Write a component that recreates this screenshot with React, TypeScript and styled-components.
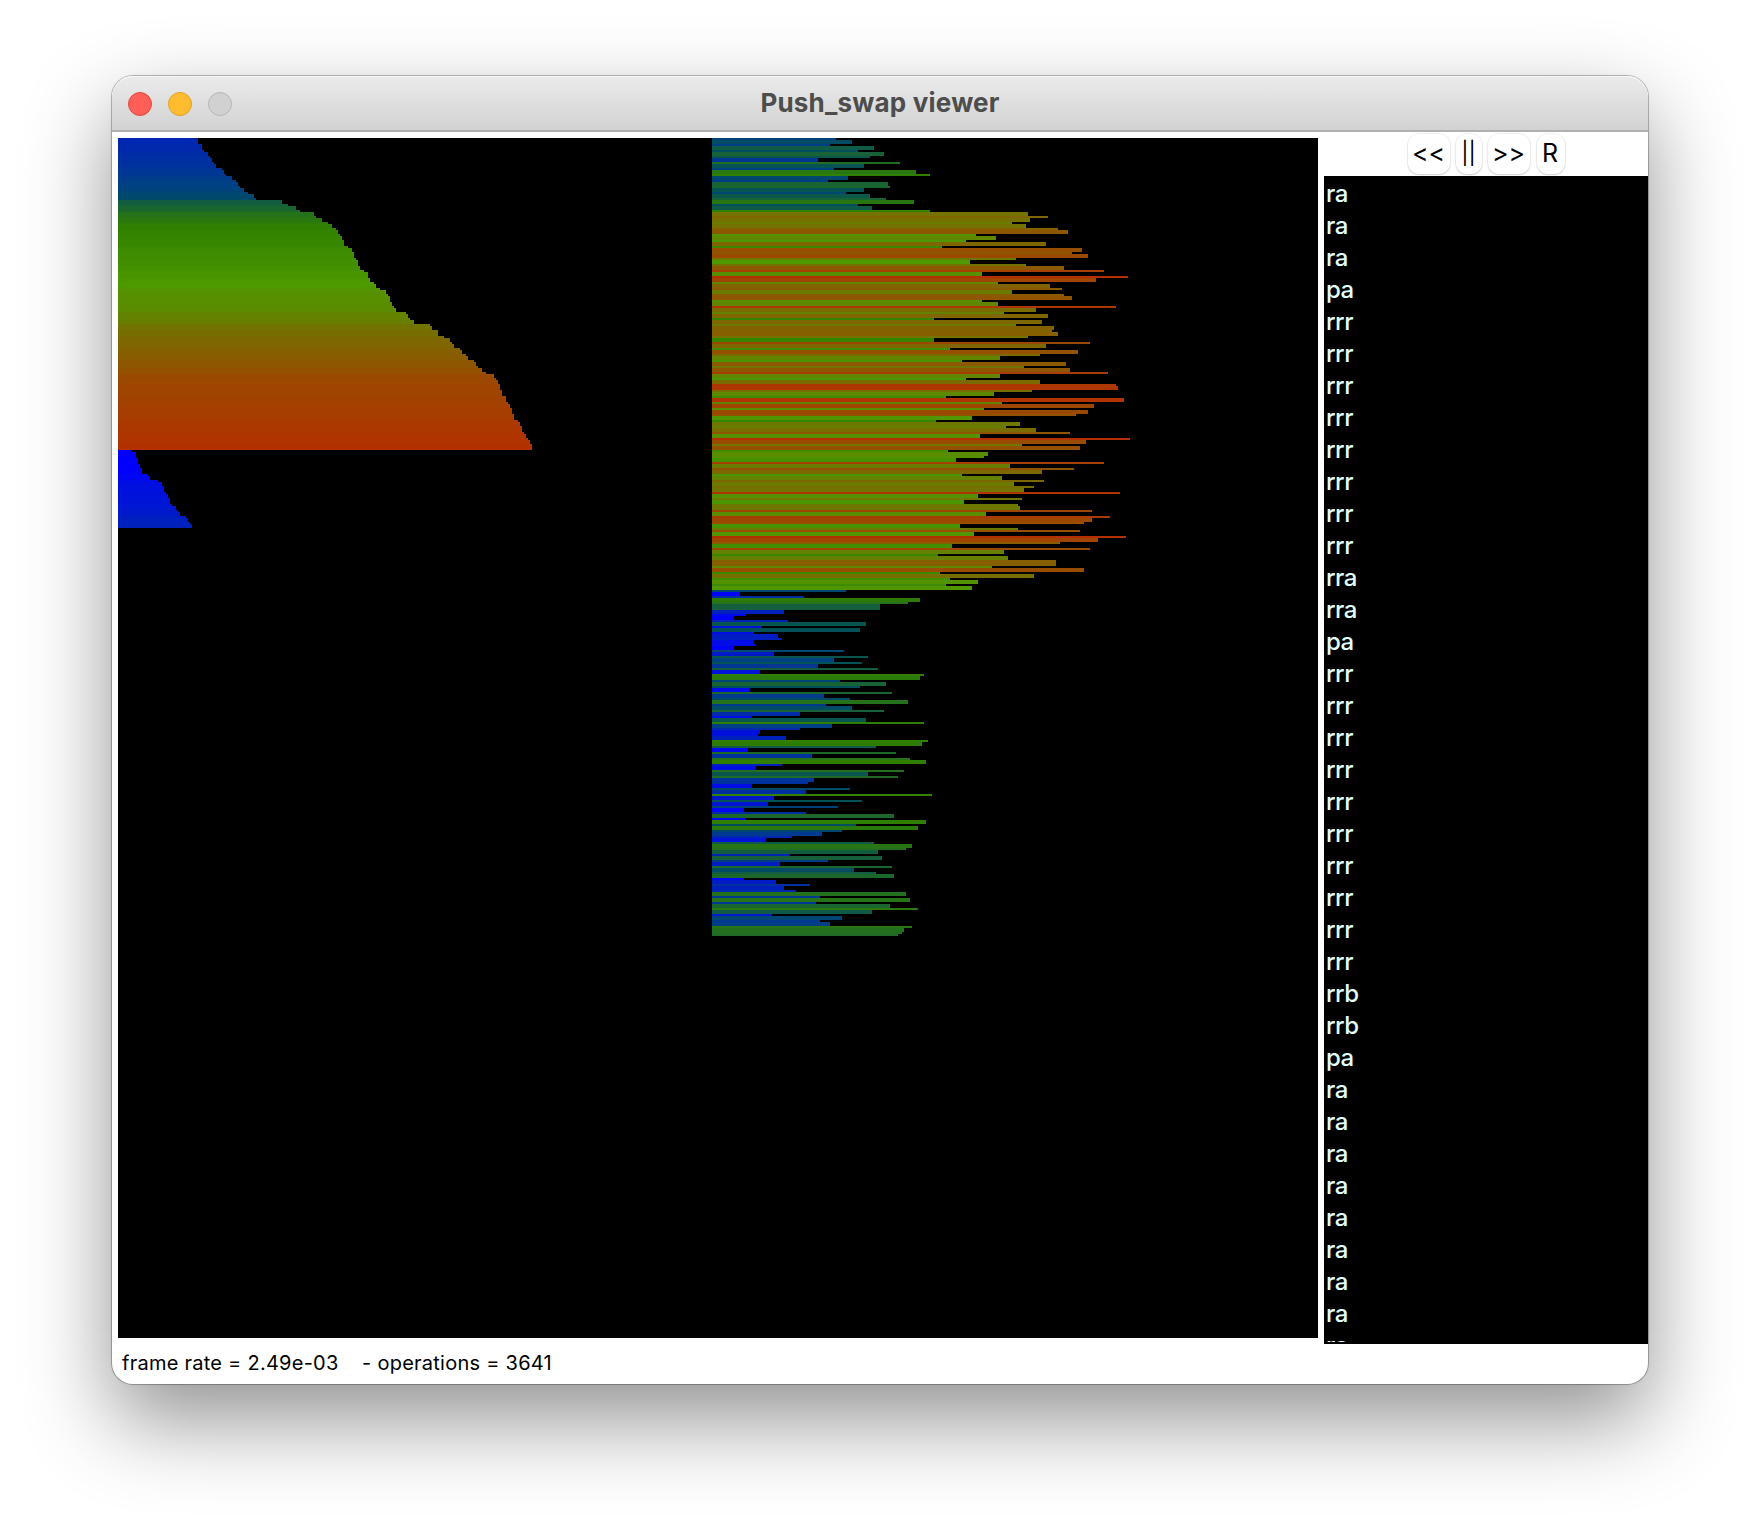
import React from "react";
import styled, { createGlobalStyle } from "styled-components";

type Run = [rows: number, value: number];
type Stop = [value: number, r: number, g: number, b: number];

const UNIT = 2;

const STACK_A: Run[] = [
  [3, 40], [3, 42], [1, 43], [2, 45], [1, 46], [2, 47], [1, 48], [2, 49], [1, 52], [2, 53], [1, 54], [2, 57],
  [1, 59], [2, 60], [1, 61], [2, 63], [1, 65], [2, 68], [1, 69], [2, 82], [1, 85], [2, 89], [1, 91], [2, 98],
  [1, 99], [2, 102], [1, 105], [2, 107], [1, 109], [2, 110], [1, 111], [2, 112], [3, 113], [1, 115], [2, 117],
  [3, 118], [1, 119], [3, 120], [2, 121], [1, 123], [3, 125], [2, 126], [1, 128], [2, 129], [1, 131], [2, 134],
  [1, 135], [3, 136], [2, 137], [1, 138], [2, 139], [1, 144], [2, 145], [1, 146], [2, 148], [1, 156], [2, 157],
  [3, 160], [1, 163], [2, 166], [1, 167], [2, 168], [1, 171], [2, 172], [1, 174], [2, 175], [1, 178], [2, 179],
  [1, 180], [2, 182], [1, 184], [2, 188], [1, 189], [2, 190], [3, 191], [3, 192], [3, 194], [1, 195], [2, 196],
  [3, 197], [3, 198], [1, 200], [2, 201], [3, 202], [1, 203], [2, 204], [1, 205], [2, 206], [3, 207],
  [1, 7], [3, 9], [3, 10], [2, 11], [3, 12], [1, 15], [2, 16], [1, 20], [2, 22], [3, 23], [1, 24], [2, 25],
  [3, 26], [1, 27], [2, 29], [1, 30], [2, 31], [1, 34], [2, 35], [1, 36], [2, 37],
];

const STACK_B: Run[] = [
  [1, 62], [2, 70], [1, 59], [2, 81], [1, 73], [2, 86], [1, 79], [2, 53], [1, 94], [2, 76], [1, 61], [2, 102],
  [1, 109], [2, 68], [1, 58], [2, 88], [1, 89], [2, 76], [1, 67], [2, 79], [1, 87], [2, 101], [1, 73], [2, 80],
  [1, 109], [2, 158], [1, 168], [2, 159], [1, 150], [2, 157], [1, 173], [2, 178], [1, 132], [2, 142], [1, 127],
  [2, 167], [1, 115], [2, 185], [1, 180], [2, 188], [1, 152], [2, 129], [1, 157], [2, 176], [1, 196], [2, 135],
  [1, 208], [2, 192], [1, 143], [2, 169], [1, 175], [2, 150], [1, 176], [2, 180], [1, 135],
  [2, 143], [1, 202], [2, 162], [1, 146], [2, 168], [1, 111], [2, 165], [1, 152], [2, 171], [1, 170], [2, 173],
  [1, 158], [2, 111], [1, 189], [2, 167], [1, 119], [2, 183], [1, 164], [2, 144], [1, 125], [2, 177], [1, 156],
  [2, 179], [1, 198], [2, 144], [1, 127], [2, 164], [1, 202], [2, 203], [1, 160], [2, 141], [1, 117], [2, 206],
  [1, 145], [2, 191], [1, 136], [2, 188], [1, 182], [2, 130], [1, 112], [2, 154], [1, 147], [2, 162], [1, 179],
  [2, 134], [1, 209], [2, 187], [1, 155], [2, 184],
  [1, 118], [2, 138], [1, 136], [2, 122], [1, 196], [2, 149], [1, 181], [2, 165], [1, 125], [2, 145], [1, 166],
  [2, 151], [1, 161], [2, 156], [1, 204], [2, 133], [1, 155], [2, 126], [1, 153], [2, 154], [1, 190], [2, 137],
  [1, 199], [2, 190], [1, 186], [2, 124], [1, 153], [1, 184], [2, 131], [1, 207], [2, 193], [1, 174], [2, 120],
  [1, 189], [2, 146], [1, 113], [2, 148], [3, 172], [1, 140], [2, 186], [1, 114], [2, 161], [1, 119], [2, 133],
  [1, 117], [2, 130],
  [1, 67], [2, 14], [1, 46], [2, 104], [1, 98], [3, 84], [2, 36], [1, 17], [2, 11], [1, 38], [2, 77], [1, 25],
  [2, 74], [1, 21], [2, 33], [1, 35], [2, 21], [1, 22], [2, 11], [1, 66], [2, 31], [1, 78], [2, 61], [1, 75],
  [2, 53], [1, 83], [2, 24], [1, 106], [2, 104], [1, 64], [2, 87], [1, 74], [2, 19], [1, 90], [2, 56], [1, 69],
  [2, 98], [1, 57], [2, 70], [1, 86], [2, 44], [1, 20], [2, 77], [1, 106], [2, 60], [1, 44], [2, 24], [1, 23],
  [2, 37], [1, 108], [2, 105], [1, 82], [2, 18], [1, 92], [2, 50], [1, 99], [2, 107], [1, 35], [2, 22],
  [1, 96], [2, 78], [1, 93], [2, 51], [1, 48], [2, 20], [1, 69], [2, 47], [1, 110], [2, 31], [1, 75], [2, 28],
  [1, 63], [2, 16], [1, 47], [2, 91], [1, 17], [2, 107], [1, 72], [2, 103], [1, 65], [2, 55], [1, 40], [2, 27],
  [1, 81], [2, 100], [1, 97], [2, 83], [1, 39], [2, 85], [1, 58], [2, 34], [1, 90], [2, 71], [1, 82], [2, 91],
  [1, 16], [2, 32], [1, 49], [2, 36], [1, 42], [2, 97], [1, 54], [2, 99], [1, 52], [2, 89], [1, 103], [2, 80],
  [1, 30], [2, 65], [1, 54], [2, 59], [1, 100], [2, 96], [1, 95], [1, 93],
];

const STOPS: Stop[] = [
  [11, 0, 0, 255],
  [40, 0, 38, 178],
  [60, 0, 64, 132],
  [74, 0, 80, 90],
  [82, 18, 92, 66],
  [108, 48, 128, 0],
  [128, 77, 153, 0],
  [208, 180, 48, 0],
];

function colorOf(value: number): string {
  const v = Math.min(Math.max(value, STOPS[0][0]), STOPS[STOPS.length - 1][0]);
  const hi = Math.max(1, STOPS.findIndex((s) => s[0] >= v));
  const a = STOPS[hi - 1];
  const b = STOPS[hi];
  const t = (v - a[0]) / (b[0] - a[0]);
  const mix = (i: 1 | 2 | 3) => Math.round(a[i] + (b[i] - a[i]) * t);
  return `rgb(${mix(1)}, ${mix(2)}, ${mix(3)})`;
}

const repeat = (op: string, n: number): string[] => Array<string>(n).fill(op);

const OPERATIONS: string[] = [
  ...repeat("ra", 3),
  "pa",
  ...repeat("rrr", 8),
  ...repeat("rra", 2),
  "pa",
  ...repeat("rrr", 10),
  ...repeat("rrb", 2),
  "pa",
  ...repeat("ra", 9),
];

const GlobalStyle = createGlobalStyle`
  *, *::before, *::after { box-sizing: border-box; }
  body { margin: 0; background: #fff; }
`;

const Desktop = styled.main`
  width: 1760px;
  height: 1532px;
  padding: 76px 112px 148px;
  overflow: hidden;
  background: #fff;
  font-family: Inter, "Liberation Sans", sans-serif;
`;

const Window = styled.section`
  display: flex;
  flex-direction: column;
  height: 1308px;
  border-radius: 21px;
  background: #fff;
  box-shadow: 0 0 0 1px rgba(0, 0, 0, 0.23), 0 0 3px rgba(0, 0, 0, 0.1), 0 36px 86px rgba(0, 0, 0, 0.43);
`;

const TitleBar = styled.header`
  display: grid;
  grid-template-columns: 1fr auto 1fr;
  align-items: center;
  flex: none;
  height: 56px;
  padding: 0 16px;
  border-radius: 21px 21px 0 0;
  border-bottom: 2px solid #b0b0b0;
  background: linear-gradient(#ebebeb, #d2d2d2);
  box-shadow: inset 0 1px 0 #f6f6f6;
`;

const Lights = styled.div`
  display: flex;
  gap: 16px;
  padding-top: 2px;
`;

const Light = styled.span<{ $fill: string; $edge: string }>`
  width: 24px;
  height: 24px;
  border-radius: 50%;
  border: 1px solid ${(p) => p.$edge};
  background: ${(p) => p.$fill};
`;

const Title = styled.h1`
  margin: 0;
  font-size: 26px;
  line-height: 32px;
  font-weight: 700;
  letter-spacing: 0.2px;
  color: #4d4d4d;
`;

const Body = styled.div`
  display: grid;
  grid-template-columns: 1200px 324px;
  justify-content: end;
  column-gap: 6px;
  height: 1212px;
`;

const Canvas = styled.div`
  display: grid;
  grid-template-columns: 594px 606px;
  align-items: start;
  margin-top: 6px;
  height: 1200px;
  background: #000;
`;

const Stack = styled.div`
  display: flex;
  flex-direction: column;
`;

const Bar = styled.div`
  flex: none;
`;

const Side = styled.aside`
  display: flex;
  flex-direction: column;
`;

const Controls = styled.div`
  display: flex;
  gap: 6px;
  flex: none;
  height: 44px;
  padding: 2px 0 2px 84px;
`;

const Control = styled.button<{ $width: number; $size?: number }>`
  width: ${(p) => p.$width}px;
  height: 40px;
  padding: 0 1px 1px 0;
  border: 0;
  border-radius: 11px;
  background: #fff;
  box-shadow: 0 0 0 1px rgba(0, 0, 0, 0.045), 0 1px 2px rgba(0, 0, 0, 0.16);
  font: 400 ${(p) => p.$size ?? 25}px/37px Inter, "Liberation Sans", sans-serif;
  color: #000;
  font-feature-settings: "calt" 0;
  white-space: nowrap;
`;

const ResetControl = styled(Control)`
  margin-left: 1px;
  padding-right: 2px;
`;

const OpList = styled.ul`
  flex: none;
  height: 1168px;
  margin: 0;
  padding: 2px 2px 0;
  border-bottom: 2px solid #000;
  overflow: hidden;
  list-style: none;
  background: #000;
`;

const Op = styled.li`
  height: 32px;
  font-size: 24px;
  line-height: 32px;
  font-weight: 500;
  letter-spacing: -0.5px;
  color: #e0ffff;
`;

const Status = styled.footer`
  padding: 6px 10px;
  font-size: 20px;
  line-height: 26px;
  letter-spacing: 0.25px;
  color: #000;
  white-space: pre;
  font-feature-settings: "calt" 0;
`;

const Chart = ({ runs }: { runs: Run[] }) => (
  <Stack>
    {runs.map(([rows, value], i) => (
      <Bar key={i} style={{ height: rows * UNIT, width: value * UNIT, background: colorOf(value) }} />
    ))}
  </Stack>
);

export default function App() {
  return (
    <Desktop>
      <GlobalStyle />
      <Window>
        <TitleBar>
          <Lights>
            <Light $fill="#ff5f57" $edge="#e2463f" />
            <Light $fill="#febc2e" $edge="#dfa023" />
            <Light $fill="#d1d1d1" $edge="#b6b6b6" />
          </Lights>
          <Title>Push_swap viewer</Title>
        </TitleBar>
        <Body>
          <Canvas>
            <Chart runs={STACK_A} />
            <Chart runs={STACK_B} />
          </Canvas>
          <Side>
            <Controls>
              <Control $width={42}>&lt;&lt;</Control>
              <Control $width={26} $size={22}>||</Control>
              <Control $width={42}>&gt;&gt;</Control>
              <ResetControl $width={28}>R</ResetControl>
            </Controls>
            <OpList>
              {OPERATIONS.map((op, i) => (
                <Op key={i}>{op}</Op>
              ))}
            </OpList>
          </Side>
        </Body>
        <Status>{"frame rate = 2.49e-03    - operations = 3641"}</Status>
      </Window>
    </Desktop>
  );
}
